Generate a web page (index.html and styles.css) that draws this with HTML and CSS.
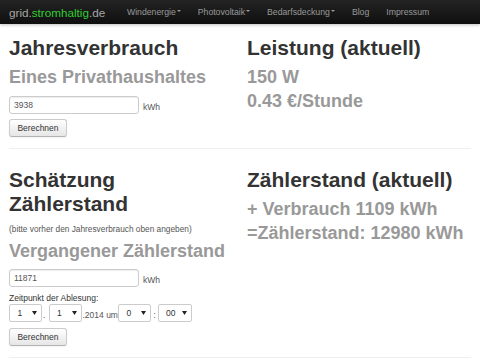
FILE: index.html
```html
<!DOCTYPE html>
<html lang="de">
<head>
<meta charset="utf-8">
<title>grid.stromhaltig.de</title>
<link rel="stylesheet" href="styles.css">
</head>
<body>
<header class="navbar">
  <a class="brand" href="#">grid.<span class="brand-accent">stromhaltig</span>.de</a>
  <ul class="nav">
    <li><a href="#">Windenergie<b class="caret"></b></a></li>
    <li><a href="#">Photovoltaik<b class="caret"></b></a></li>
    <li><a href="#">Bedarfsdeckung<b class="caret"></b></a></li>
    <li><a href="#">Blog</a></li>
    <li><a href="#">Impressum</a></li>
  </ul>
</header>

<main class="container">
  <section class="row row-first">
    <div class="col">
      <h2 class="title">Jahresverbrauch</h2>
      <h3 class="subtitle">Eines Privathaushaltes</h3>
      <div class="field">
        <div class="input">3938</div>
        <span class="unit">kWh</span>
      </div>
      <button class="btn">Berechnen</button>
    </div>
    <div class="col">
      <h2 class="title">Leistung (aktuell)</h2>
      <p class="stat stat-first">150 W</p>
      <p class="stat">0.43 €/Stunde</p>
    </div>
  </section>
  <hr class="divider">

  <section class="row row-second">
    <div class="col">
      <h2 class="title">Schätzung Zählerstand</h2>
      <p class="hint">(bitte vorher den Jahresverbrauch oben angeben)</p>
      <h3 class="subtitle subtitle-tight">Vergangener Zählerstand</h3>
      <div class="field field-second">
        <div class="input">11871</div>
        <span class="unit">kWh</span>
      </div>
      <div class="label">Zeitpunkt der Ablesung:</div>
      <div class="datetime">
        <div class="select"><span>1</span><svg class="arrow" width="5" height="4" viewBox="0 0 5 4"><path d="M0 0h5L2.5 4z"/></svg></div>
        <span class="sep sep-dot">.</span>
        <div class="select"><span>1</span><svg class="arrow" width="5" height="4" viewBox="0 0 5 4"><path d="M0 0h5L2.5 4z"/></svg></div>
        <span class="sep sep-year">.2014 um</span>
        <div class="select"><span>0</span><svg class="arrow" width="5" height="4" viewBox="0 0 5 4"><path d="M0 0h5L2.5 4z"/></svg></div>
        <span class="sep sep-colon">:</span>
        <div class="select select-wide"><span>00</span><svg class="arrow" width="5" height="4" viewBox="0 0 5 4"><path d="M0 0h5L2.5 4z"/></svg></div>
      </div>
      <button class="btn btn-second">Berechnen</button>
    </div>
    <div class="col">
      <h2 class="title">Zählerstand (aktuell)</h2>
      <p class="stat stat-first">+ Verbrauch 1109 kWh</p>
      <p class="stat">=Zählerstand: 12980 kWh</p>
    </div>
  </section>
  <hr class="divider">
</main>
</body>
</html>
```

FILE: styles.css
```css
* { box-sizing: border-box; }

html, body {
  margin: 0;
  padding: 0;
  background: #fff;
  font-family: "Liberation Sans", Arial, Helvetica, sans-serif;
  color: #333;
  overflow: hidden;
}

/* Navbar */
.navbar {
  height: 24px;
  display: flex;
  align-items: center;
  padding-left: 9px;
  background: linear-gradient(#232323, #0f0f0f);
  box-shadow: 0 1px 3px rgba(0, 0, 0, 0.25);
}

.brand {
  font-size: 11.7px;
  line-height: 24px;
  color: #a6a6a6;
  text-decoration: none;
  margin-right: 12.5px;
  padding-top: 1px;
}

.brand-accent { color: #33cc33; }

.nav {
  display: flex;
  margin: 0;
  padding: 0;
  list-style: none;
}

.nav a {
  display: block;
  padding: 0 8.5px;
  font-size: 8.7px;
  line-height: 24px;
  color: #999;
  text-decoration: none;
}

.nav li:first-child a { padding-left: 9.3px; }

.caret {
  display: inline-block;
  width: 0;
  height: 0;
  margin-left: 1px;
  border-top: 2.5px solid #999;
  border-left: 2px solid transparent;
  border-right: 2px solid transparent;
  vertical-align: 3.5px;
}

/* Layout */
.container {
  padding: 0 9px;
  width: 480px;
}

.row {
  display: grid;
  grid-template-columns: 224px 1fr;
  column-gap: 14px;
  align-items: start;
}

.row-first { padding-top: 12px; }
.row-second { padding-top: 17.5px; }

.col { min-width: 0; }

.title {
  margin: 0;
  font-size: 21px;
  line-height: 24px;
  font-weight: bold;
  color: #333;
}

.subtitle {
  margin: 5px 0 0;
  font-size: 18px;
  line-height: 24px;
  font-weight: bold;
  color: #999;
}

.subtitle-tight { margin-top: 4.5px; }

.stat {
  margin: 0;
  font-size: 18px;
  line-height: 24px;
  font-weight: bold;
  color: #999;
}

.stat-first { margin-top: 5px; }

.hint {
  margin: 7px 0 0;
  font-size: 8.3px;
  line-height: 12px;
  color: #555;
}

.field {
  display: flex;
  margin-top: 7px;
}

.field-second { margin-top: 6px; }

.input {
  width: 130px;
  height: 18px;
  padding: 0 4px;
  border: 1px solid #ccc;
  border-radius: 3px;
  box-shadow: inset 0 1px 1px rgba(0, 0, 0, 0.075);
  font-size: 8.5px;
  line-height: 16px;
  color: #555;
}

.unit {
  align-self: flex-end;
  margin: 0 0 1px 4px;
  font-size: 8.5px;
  line-height: 12px;
  color: #555;
}

.btn {
  display: block;
  margin-top: 5px;
  width: 58px;
  height: 18px;
  padding: 0;
  font-family: "Liberation Sans", Arial, sans-serif;
  font-size: 8.5px;
  line-height: 16px;
  color: #333;
  text-align: center;
  background: linear-gradient(#ffffff, #e6e6e6);
  border: 1px solid #cccccc;
  border-bottom-color: #b3b3b3;
  border-radius: 3px;
  box-shadow: inset 0 1px 0 rgba(255, 255, 255, 0.2), 0 1px 2px rgba(0, 0, 0, 0.05);
}

.btn-second { margin-top: 6px; }

.label {
  margin-top: 5.5px;
  font-size: 8.5px;
  line-height: 11px;
  color: #333;
}

.datetime {
  display: flex;
  align-items: flex-end;
}

.select {
  display: flex;
  align-items: center;
  justify-content: space-between;
  width: 33px;
  height: 18px;
  padding: 0 4px 0 7.5px;
  background: #fff;
  border: 1px solid #ccc;
  border-radius: 2px;
  font-size: 8.5px;
  color: #333;
}

.select-wide { width: 34px; padding-left: 7px; }

.arrow { fill: #222; }

.sep {
  font-size: 8.5px;
  line-height: 12px;
  color: #555;
  margin-bottom: 1px;
}

.sep-dot { width: 6.5px; padding-left: 1px; }
.sep-year { width: 36.5px; padding-left: 1px; }
.sep-colon { width: 7px; padding-left: 2.5px; }

.divider {
  margin: 11px 0 0;
  height: 0;
  border: 0;
  border-top: 1px solid #eee;
  border-bottom: 1px solid #fff;
}
```
